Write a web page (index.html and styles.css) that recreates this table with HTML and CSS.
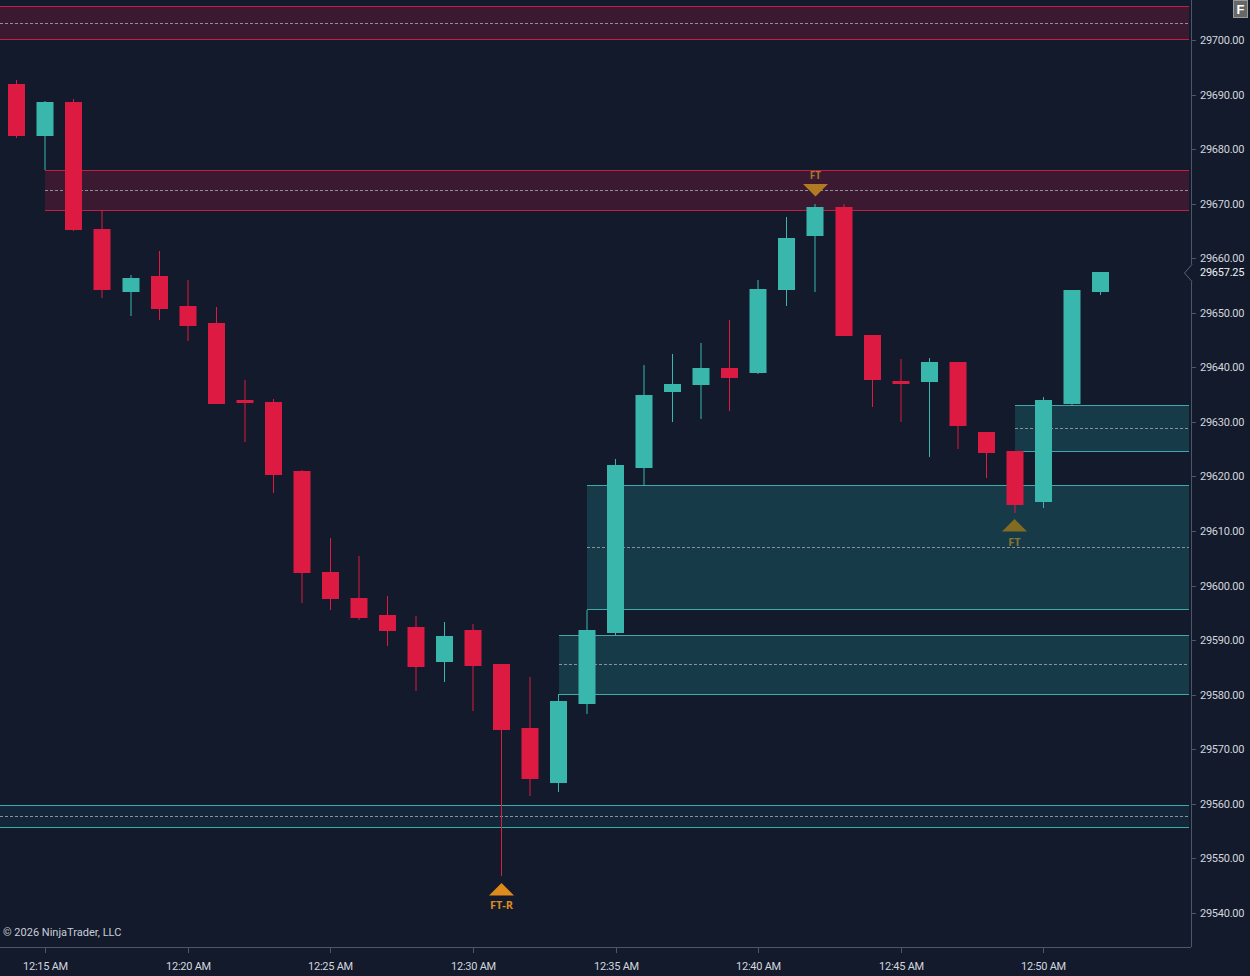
FILE: index.html
```html
<!DOCTYPE html>
<html lang="en">
<head>
<meta charset="utf-8">
<title>Chart</title>
<link rel="stylesheet" href="styles.css">
</head>
<body>
<div class="chart">
  <div class="plot">
    <svg class="plot-svg" width="1191" height="947" viewBox="0 0 1191 947">
      <!-- zones -->
      <g class="zone zone-red">
        <rect class="zfill" x="0" y="6" width="1189" height="34"/>
        <line class="zline" x1="0" y1="6.5" x2="1189" y2="6.5"/>
        <line class="zline" x1="0" y1="39.5" x2="1189" y2="39.5"/>
        <line class="zmid" x1="0" y1="23.5" x2="1189" y2="23.5"/>
      </g>
      <g class="zone zone-red">
        <rect class="zfill" x="45" y="170" width="1144" height="41"/>
        <line class="zline" x1="45" y1="170.5" x2="1189" y2="170.5"/>
        <line class="zline" x1="45" y1="210.5" x2="1189" y2="210.5"/>
        <line class="zmid" x1="45" y1="190.5" x2="1189" y2="190.5"/>
      </g>
      <g class="zone zone-teal">
        <rect class="zfill" x="1015" y="405" width="174" height="47"/>
        <line class="zline" x1="1015" y1="405.5" x2="1189" y2="405.5"/>
        <line class="zline" x1="1015" y1="451.5" x2="1189" y2="451.5"/>
        <line class="zmid" x1="1015" y1="428.5" x2="1189" y2="428.5"/>
      </g>
      <g class="zone zone-teal">
        <rect class="zfill" x="587" y="485" width="602" height="125"/>
        <line class="zline" x1="587" y1="485.5" x2="1189" y2="485.5"/>
        <line class="zline" x1="587" y1="609.5" x2="1189" y2="609.5"/>
        <line class="zmid" x1="587" y1="547.5" x2="1189" y2="547.5"/>
      </g>
      <g class="zone zone-teal">
        <rect class="zfill" x="559" y="635" width="630" height="60"/>
        <line class="zline" x1="559" y1="635.5" x2="1189" y2="635.5"/>
        <line class="zline" x1="559" y1="694.5" x2="1189" y2="694.5"/>
        <line class="zmid" x1="559" y1="664.5" x2="1189" y2="664.5"/>
      </g>
      <g class="zone zone-teal zone-faint">
        <rect class="zfill" x="0" y="805" width="1189" height="23"/>
        <line class="zline" x1="0" y1="805.5" x2="1189" y2="805.5"/>
        <line class="zline" x1="0" y1="827.5" x2="1189" y2="827.5"/>
        <line class="zmid" x1="0" y1="816.5" x2="1189" y2="816.5"/>
      </g>

      <!-- candles -->
      <g class="candles">
        <g class="dn"><rect x="16" y="80" width="1" height="58"/><rect x="8" y="84" width="17" height="52"/></g>
        <g class="up"><rect x="44.5" y="101" width="1" height="69"/><rect x="36.5" y="102" width="17" height="34"/></g>
        <g class="dn"><rect x="73" y="99" width="1" height="132"/><rect x="65" y="102" width="17" height="128"/></g>
        <g class="dn"><rect x="101.5" y="210" width="1" height="88"/><rect x="93.5" y="229" width="17" height="61"/></g>
        <g class="up"><rect x="130.5" y="275" width="1" height="41"/><rect x="122.5" y="278" width="17" height="14"/></g>
        <g class="dn"><rect x="159" y="251" width="1" height="69"/><rect x="151" y="276" width="17" height="33"/></g>
        <g class="dn"><rect x="187.5" y="280" width="1" height="61"/><rect x="179.5" y="306" width="17" height="20"/></g>
        <g class="dn"><rect x="216" y="307" width="1" height="97"/><rect x="208" y="323" width="17" height="81"/></g>
        <g class="dn"><rect x="244.5" y="380" width="1" height="62"/><rect x="236.5" y="400" width="17" height="3"/></g>
        <g class="dn"><rect x="273" y="399" width="1" height="94"/><rect x="265" y="402" width="17" height="73"/></g>
        <g class="dn"><rect x="301.5" y="470" width="1" height="133"/><rect x="293.5" y="471" width="17" height="102"/></g>
        <g class="dn"><rect x="330" y="538" width="1" height="72"/><rect x="322" y="572" width="17" height="27"/></g>
        <g class="dn"><rect x="358.5" y="556" width="1" height="64"/><rect x="350.5" y="598" width="17" height="20"/></g>
        <g class="dn"><rect x="387" y="596" width="1" height="50"/><rect x="379" y="615" width="17" height="16"/></g>
        <g class="dn"><rect x="415.5" y="616" width="1" height="75"/><rect x="407.5" y="627" width="17" height="40"/></g>
        <g class="up"><rect x="444" y="622" width="1" height="60"/><rect x="436" y="636" width="17" height="26"/></g>
        <g class="dn"><rect x="472.5" y="624" width="1" height="87"/><rect x="464.5" y="630" width="17" height="36"/></g>
        <g class="dn"><rect x="501" y="664" width="1" height="212"/><rect x="493" y="664" width="17" height="66"/></g>
        <g class="dn"><rect x="529.5" y="677" width="1" height="119"/><rect x="521.5" y="728" width="17" height="51"/></g>
        <g class="up"><rect x="558" y="694" width="1" height="98"/><rect x="550" y="701" width="17" height="82"/></g>
        <g class="up"><rect x="586.5" y="610" width="1" height="104"/><rect x="578.5" y="630" width="17" height="74"/></g>
        <g class="up"><rect x="615" y="459" width="1" height="176"/><rect x="607" y="465" width="17" height="168"/></g>
        <g class="up"><rect x="643.5" y="365" width="1" height="121"/><rect x="635.5" y="395" width="17" height="73"/></g>
        <g class="up"><rect x="672" y="354" width="1" height="68"/><rect x="664" y="384" width="17" height="8"/></g>
        <g class="up"><rect x="700.5" y="343" width="1" height="76"/><rect x="692.5" y="368" width="17" height="17"/></g>
        <g class="dn"><rect x="729" y="320" width="1" height="91"/><rect x="721" y="368" width="17" height="10"/></g>
        <g class="up"><rect x="757.5" y="280" width="1" height="94"/><rect x="749.5" y="289" width="17" height="84"/></g>
        <g class="up"><rect x="786" y="217" width="1" height="89"/><rect x="778" y="238" width="17" height="52"/></g>
        <g class="up"><rect x="814.5" y="204" width="1" height="88"/><rect x="806.5" y="207" width="17" height="29"/></g>
        <g class="dn"><rect x="843.5" y="204" width="1" height="132"/><rect x="835.5" y="207" width="17" height="129"/></g>
        <g class="dn"><rect x="872" y="335" width="1" height="72"/><rect x="864" y="335" width="17" height="45"/></g>
        <g class="dn"><rect x="900.5" y="359" width="1" height="63"/><rect x="892.5" y="381" width="17" height="3"/></g>
        <g class="up"><rect x="929" y="358" width="1" height="99"/><rect x="921" y="362" width="17" height="20"/></g>
        <g class="dn"><rect x="957.5" y="362" width="1" height="87"/><rect x="949.5" y="362" width="17" height="64"/></g>
        <g class="dn"><rect x="986" y="432" width="1" height="46"/><rect x="978" y="432" width="17" height="21"/></g>
        <g class="dn"><rect x="1014.5" y="451" width="1" height="62"/><rect x="1006.5" y="451" width="17" height="54"/></g>
        <g class="up"><rect x="1043" y="397" width="1" height="111"/><rect x="1035" y="400" width="17" height="102"/></g>
        <g class="up"><rect x="1071.5" y="290" width="1" height="116"/><rect x="1063.5" y="290" width="17" height="114"/></g>
        <g class="up"><rect x="1100" y="272" width="1" height="23"/><rect x="1092" y="272" width="17" height="20"/></g>
      </g>

      <!-- signal markers -->
      <g class="marker marker-dim">
        <text x="815.5" y="178.5">FT</text>
        <polygon points="803,184 828,184 815.5,196.5"/>
      </g>
      <g class="marker marker-dim2">
        <polygon points="1002,531.5 1027,531.5 1014.5,519"/>
        <text x="1014.5" y="545.5">FT</text>
      </g>
      <g class="marker marker-bright">
        <polygon points="489,895.5 514,895.5 501.5,883"/>
        <text x="501.5" y="908.5">FT-R</text>
      </g>
    </svg>
    <div class="copyright">© 2026 NinjaTrader, LLC</div>
  </div>

  <div class="price-axis">
    <svg class="axis-svg" width="58" height="947" viewBox="0 0 58 947">
      <g class="ticks">
        <line x1="0" y1="40.5" x2="4" y2="40.5"/>
        <line x1="0" y1="95.5" x2="4" y2="95.5"/>
        <line x1="0" y1="149.5" x2="4" y2="149.5"/>
        <line x1="0" y1="204.5" x2="4" y2="204.5"/>
        <line x1="0" y1="258.5" x2="4" y2="258.5"/>
        <line x1="0" y1="313.5" x2="4" y2="313.5"/>
        <line x1="0" y1="367.5" x2="4" y2="367.5"/>
        <line x1="0" y1="422.5" x2="4" y2="422.5"/>
        <line x1="0" y1="476.5" x2="4" y2="476.5"/>
        <line x1="0" y1="531.5" x2="4" y2="531.5"/>
        <line x1="0" y1="586.5" x2="4" y2="586.5"/>
        <line x1="0" y1="640.5" x2="4" y2="640.5"/>
        <line x1="0" y1="695.5" x2="4" y2="695.5"/>
        <line x1="0" y1="749.5" x2="4" y2="749.5"/>
        <line x1="0" y1="804.5" x2="4" y2="804.5"/>
        <line x1="0" y1="858.5" x2="4" y2="858.5"/>
        <line x1="0" y1="913.5" x2="4" y2="913.5"/>
      </g>
      <g class="labels">
        <text x="8" y="44">29700.00</text>
        <text x="8" y="99">29690.00</text>
        <text x="8" y="153">29680.00</text>
        <text x="8" y="208">29670.00</text>
        <text x="8" y="262">29660.00</text>
        <text x="8" y="317">29650.00</text>
        <text x="8" y="371">29640.00</text>
        <text x="8" y="426">29630.00</text>
        <text x="8" y="480">29620.00</text>
        <text x="8" y="535">29610.00</text>
        <text x="8" y="590">29600.00</text>
        <text x="8" y="644">29590.00</text>
        <text x="8" y="699">29580.00</text>
        <text x="8" y="753">29570.00</text>
        <text x="8" y="808">29560.00</text>
        <text x="8" y="862">29550.00</text>
        <text x="8" y="917">29540.00</text>
      </g>
    </svg>
    <div class="badge-f">F</div>
    <div class="last-price">
      <svg class="last-price-shape" width="66" height="18" viewBox="0 0 66 18">
        <polygon class="lp-bg" points="8,0 66,0 66,18 8,18 0.5,9"/>
        <polyline class="lp-edge" points="8,0.5 0.5,9 8,17.5"/>
      </svg>
      <span class="last-price-text">29657.25</span>
    </div>
  </div>

  <div class="time-axis">
    <svg class="axis-svg" width="1191" height="29" viewBox="0 0 1191 29">
      <g class="ticks">
        <line x1="45.5" y1="0" x2="45.5" y2="5"/>
        <line x1="188.5" y1="0" x2="188.5" y2="5"/>
        <line x1="330.5" y1="0" x2="330.5" y2="5"/>
        <line x1="473.5" y1="0" x2="473.5" y2="5"/>
        <line x1="616.5" y1="0" x2="616.5" y2="5"/>
        <line x1="758.5" y1="0" x2="758.5" y2="5"/>
        <line x1="901.5" y1="0" x2="901.5" y2="5"/>
        <line x1="1043.5" y1="0" x2="1043.5" y2="5"/>
      </g>
      <g class="labels tl">
        <text x="45.5" y="22">12:15 AM</text>
        <text x="188.5" y="22">12:20 AM</text>
        <text x="330.5" y="22">12:25 AM</text>
        <text x="473.5" y="22">12:30 AM</text>
        <text x="616.5" y="22">12:35 AM</text>
        <text x="758.5" y="22">12:40 AM</text>
        <text x="901.5" y="22">12:45 AM</text>
        <text x="1043.5" y="22">12:50 AM</text>
      </g>
    </svg>
  </div>
  <div class="corner"></div>
</div>
</body>
</html>
```

FILE: styles.css
```css
html, body {
  margin: 0;
  padding: 0;
  background: #131a2b;
  overflow: hidden;
}

body {
  width: 1250px;
  height: 976px;
  font-family: Roboto, "Noto Sans", "Liberation Sans", sans-serif;
  color: #d4d8e0;
}

.chart {
  display: grid;
  grid-template-columns: 1191px 1fr;
  grid-template-rows: 947px 1fr;
  width: 1250px;
  height: 976px;
}

.plot {
  position: relative;
  overflow: hidden;
}

.plot-svg,
.axis-svg {
  display: block;
}

/* zones */
.zone .zmid {
  stroke: #8c909c;
  stroke-width: 1;
  stroke-dasharray: 3 2;
}

.zone .zline {
  stroke-width: 1;
}

.zone-red .zfill { fill: #3b1a31; }
.zone-red .zline { stroke: #c41d44; }

.zone-teal .zfill { fill: #173a48; }
.zone-teal .zline { stroke: #3fa9aa; }

.zone-faint .zfill { fill: #14263a; }

/* candles */
.candles .up { fill: #3ab7ad; }
.candles .dn { fill: #dd1a41; }

/* markers */
.marker text {
  font-family: "Open Sans", "Noto Sans", sans-serif;
  font-weight: 700;
  font-size: 10px;
  text-anchor: middle;
}

.marker-bright polygon { fill: #df8a1c; }
.marker-bright text { fill: #df8a1c; font-size: 11px; }

.marker-dim polygon { fill: #b27a22; }
.marker-dim text { fill: #a07a2e; }

.marker-dim2 polygon { fill: #826c22; }
.marker-dim2 text { fill: #8a7430; font-size: 11px; }

.copyright {
  position: absolute;
  left: 3px;
  bottom: 8px;
  font-size: 11px;
  color: #c9ced8;
  white-space: nowrap;
}

/* price axis */
.price-axis {
  position: relative;
  border-left: 1px solid #4c5669;
}

.ticks line {
  stroke: #4c5669;
  stroke-width: 1;
}

.labels text {
  font-size: 11px;
  letter-spacing: -0.25px;
  fill: #d2d6de;
}

.tl text {
  text-anchor: middle;
}

.badge-f {
  position: absolute;
  top: 0;
  right: 2px;
  width: 15px;
  height: 18px;
  background: #676767;
  border: 1px solid #9a9a9a;
  box-sizing: border-box;
  color: #ffffff;
  font-family: "Liberation Sans", sans-serif;
  font-weight: 700;
  font-size: 13px;
  line-height: 17px;
  text-align: center;
}

.last-price {
  position: absolute;
  top: 264px;
  left: -8px;
  width: 66px;
  height: 18px;
}

.last-price-shape {
  position: absolute;
  left: 0;
  top: 0;
}

.lp-bg {
  fill: #131a2b;
}

.lp-edge {
  fill: none;
  stroke: #5a6478;
  stroke-width: 1;
}

.last-price-text {
  position: absolute;
  left: 16px;
  top: 2px;
  font-size: 11px;
  letter-spacing: -0.25px;
  line-height: 14px;
  color: #eef0f4;
}

/* time axis */
.time-axis {
  border-top: 1px solid #4c5669;
}

.corner {
  background: #131a2b;
}
```
